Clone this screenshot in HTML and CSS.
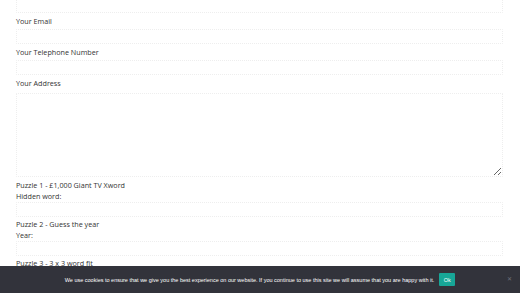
FILE: index.html
```html
<!DOCTYPE html>
<html lang="en">
<head>
    <meta charset="UTF-8">
    <meta name="viewport" content="width=device-width, initial-scale=1.0">
    <title>Competition Entry</title>
    <link rel="stylesheet" href="styles.css">
</head>
<body>
    <form class="entry-form">
        <div class="field">
            <input type="text" id="name">
        </div>
        <div class="field">
            <label for="email">Your Email</label>
            <input type="email" id="email">
        </div>
        <div class="field">
            <label for="phone">Your Telephone Number</label>
            <input type="tel" id="phone">
        </div>
        <div class="field address">
            <label for="address">Your Address</label>
            <textarea id="address"></textarea>
        </div>

        <div class="puzzle">
            <p class="puzzle-title">Puzzle 1 - £1,000 Giant TV Xword</p>
            <label for="p1">Hidden word:</label>
            <input type="text" id="p1">
        </div>
        <div class="puzzle">
            <p class="puzzle-title">Puzzle 2 - Guess the year</p>
            <label for="p2">Year:</label>
            <input type="text" id="p2">
        </div>
        <div class="puzzle">
            <p class="puzzle-title">Puzzle 3 - 3 x 3 word fit</p>
        </div>
    </form>

    <div class="cookie-bar">
        <span class="cookie-text">We use cookies to ensure that we give you the best experience on our website. If you continue to use this site we will assume that you are happy with it.</span>
        <button class="cookie-ok">Ok</button>
        <span class="cookie-close">&#x2715;</span>
    </div>
</body>
</html>
```

FILE: styles.css
```css
/* Grundlayout */
body {
    margin: 0;
    padding: 0;
    background: #fff;
    font-family: "Open Sans", Arial, sans-serif;
    color: #333;
    overflow: hidden;
}
.entry-form {
    width: 487px;
    margin: -2px 0 0 16px;
}
.field {
    margin-bottom: 2px;
}
label {
    display: block;
    font-size: 7.2px;
    line-height: 12px;
    margin-bottom: 2px;
}
input[type="text"],
input[type="email"],
input[type="tel"],
textarea {
    display: block;
    box-sizing: border-box;
    width: 100%;
    height: 15px;
    margin: 0;
    padding: 2px 4px;
    border: 1px dotted #eeeeee;
    border-radius: 1px;
    background: #fff;
    font-family: inherit;
    font-size: 7.2px;
}
.address label {
    margin-bottom: 4px;
}
textarea {
    height: 84px;
    margin-bottom: 3px;
    resize: vertical;
}
.puzzle {
    margin-bottom: 2px;
}
.puzzle-title {
    margin: 0;
    font-size: 7.2px;
    line-height: 11px;
}
.puzzle label {
    line-height: 11px;
    margin-bottom: 0;
}

/* Cookie-Hinweis */
.cookie-bar {
    position: fixed;
    left: 0;
    right: 0;
    bottom: 0;
    height: 27px;
    background: #32333b;
    display: flex;
    align-items: center;
    justify-content: center;
    font-family: "Liberation Sans", Arial, sans-serif;
    color: #fff;
}
.cookie-text {
    font-size: 5.5px;
}
.cookie-ok {
    margin-left: 5px;
    width: 16px;
    height: 13px;
    padding: 0;
    border: none;
    border-radius: 1px;
    background: #17a697;
    color: #fff;
    font-family: "Liberation Sans", Arial, sans-serif;
    font-size: 5.5px;
    cursor: pointer;
}
.cookie-close {
    position: absolute;
    right: 8px;
    top: 9px;
    font-size: 6px;
    color: #6f7079;
}
```
